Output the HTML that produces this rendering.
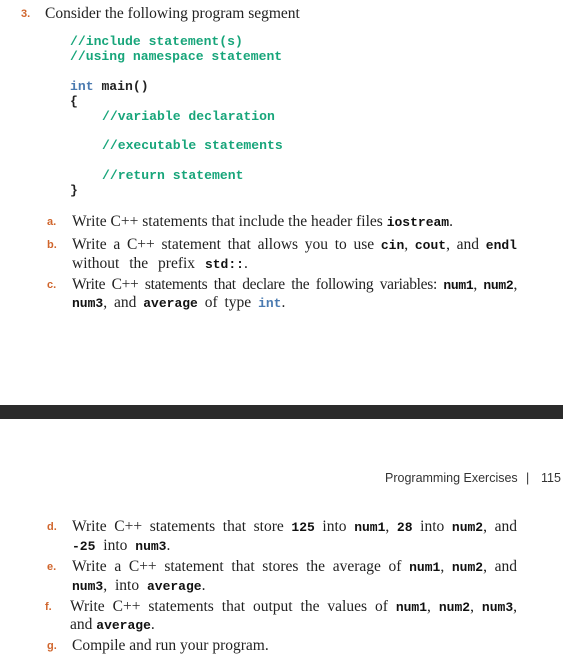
<!DOCTYPE html>
<html><head><meta charset="utf-8"><style>
html,body{margin:0;padding:0;background:#fff;width:563px;height:669px;overflow:hidden;position:relative}
div{position:absolute;white-space:nowrap}
.s{font-family:"Liberation Serif",serif;font-size:15.5px;color:#222;line-height:16px}
.c{font-family:"Liberation Mono",monospace;font-weight:bold;font-size:13.1px;color:#17a57a;line-height:14px}
.k{color:#222}.b{color:#4a7ab0}
.l{font-family:"Liberation Sans",sans-serif;font-size:11px;font-weight:bold;color:#d0652c;line-height:16px}
.j{width:445px;text-align:justify;text-align-last:justify;white-space:normal}
code{font-family:"Liberation Mono",monospace;font-weight:bold;font-size:13px;color:#111}
code.i{color:#4a7ab0}
.h{font-family:'Liberation Sans',sans-serif;font-size:12.5px;color:#333;top:471px}
</style></head><body>
<div class="l" style="left:21px;top:6px;font-size:11px">3.</div>
<div class="s" style="left:45px;top:6px">Consider the following program segment</div>
<div class="c" style="left:70px;top:35px">//include statement(s)</div>
<div class="c" style="left:70px;top:50px">//using namespace statement</div>
<div class="c" style="left:70px;top:80px"><span class="b">int</span> <span class="k">main()</span></div>
<div class="c k" style="left:70px;top:95px;color:#222">{</div>
<div class="c" style="left:102px;top:110px">//variable declaration</div>
<div class="c" style="left:102px;top:139px">//executable statements</div>
<div class="c" style="left:102px;top:169px">//return statement</div>
<div class="c" style="left:70px;top:184px;color:#222">}</div>

<div class="l" style="left:47px;top:214px">a.</div>
<div class="s" style="left:72px;top:214px">Write C++ statements that include the header files <code>iostream</code>.</div>
<div class="l" style="left:47px;top:237px">b.</div>
<div class="s j" style="left:72px;top:237px">Write a C++ statement that allows you to use <code>cin</code>, <code>cout</code>, and <code>endl</code></div>
<div class="s" style="left:72px;top:256px;word-spacing:6px">without the prefix <code>std::</code>.</div>
<div class="l" style="left:47px;top:277px">c.</div>
<div class="s j" style="left:72px;top:277px;letter-spacing:-0.3px">Write C++ statements that declare the following variables: <code>num1</code>, <code>num2</code>,</div>
<div class="s" style="left:72px;top:295px;word-spacing:3px"><code>num3</code>, and <code>average</code> of type <code class="i">int</code>.</div>

<div style="left:0;top:405px;width:563px;height:14px;background:#2b2b2b"></div>

<div class="h" style="left:385px">Programming Exercises</div>
<div class="h" style="left:526px">|</div>
<div class="h" style="left:541px">115</div>

<div class="l" style="left:47px;top:519px">d.</div>
<div class="s j" style="left:72px;top:519px">Write C++ statements that store <code>125</code> into <code>num1</code>, <code>28</code> into <code>num2</code>, and</div>
<div class="s" style="left:72px;top:538px;word-spacing:4px"><code>-25</code> into <code>num3</code>.</div>
<div class="l" style="left:47px;top:559px">e.</div>
<div class="s j" style="left:72px;top:559px">Write a C++ statement that stores the average of <code>num1</code>, <code>num2</code>, and</div>
<div class="s" style="left:72px;top:578px;word-spacing:4px"><code>num3</code>, into <code>average</code>.</div>
<div class="l" style="left:45px;top:599px">f.</div>
<div class="s j" style="left:70px;top:599px;width:447px">Write C++ statements that output the values of <code>num1</code>, <code>num2</code>, <code>num3</code>,</div>
<div class="s" style="left:70px;top:617px">and <code>average</code>.</div>
<div class="l" style="left:47px;top:638px">g.</div>
<div class="s" style="left:72px;top:638px">Compile and run your program.</div>
</body></html>
